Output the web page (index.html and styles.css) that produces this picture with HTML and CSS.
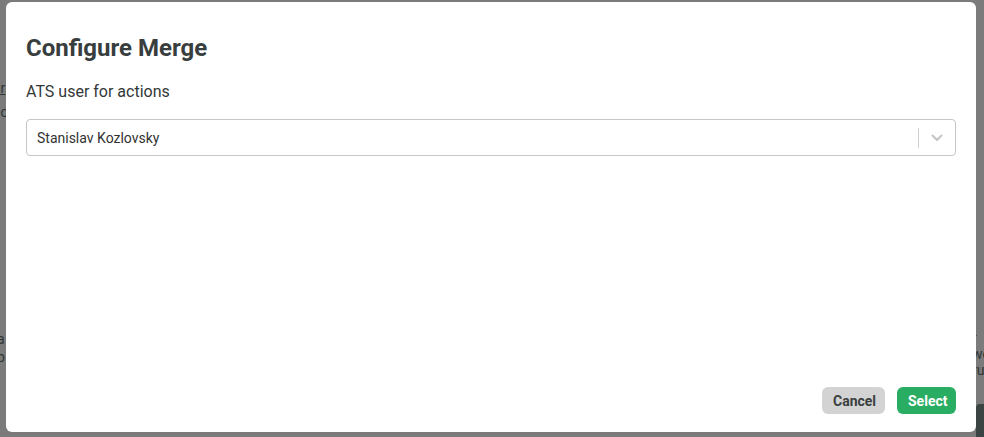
FILE: index.html
```html
<!DOCTYPE html>
<html>
<head>
<meta charset="utf-8">
<link rel="stylesheet" href="styles.css">
</head>
<body>
<div class="backdrop">
  <div class="bg-text left-top"><span class="u">ar</span><br>ec</div>
  <div class="bg-text left-bottom">a<br>b</div>
  <div class="bg-text right-bottom">r<br>wo<br>ru</div>
  <div class="bg-box"></div>
</div>
<div class="modal">
  <h1 class="title">Configure Merge</h1>
  <div class="label">ATS user for actions</div>
  <div class="select">
    <span class="value">Stanislav Kozlovsky</span>
    <span class="sep"></span>
    <span class="chev"><svg width="12" height="8" viewBox="0 0 12 8"><path d="M1.5 1.5 L6 6 L10.5 1.5" fill="none" stroke="#c4c4c4" stroke-width="2" stroke-linecap="round" stroke-linejoin="round"/></svg></span>
  </div>
  <div class="spacer"></div>
  <div class="actions">
    <button class="btn cancel">Cancel</button>
    <button class="btn select-btn">Select</button>
  </div>
</div>
</body>
</html>
```

FILE: styles.css
```css
html, body {
  margin: 0;
  padding: 0;
  width: 984px;
  height: 437px;
  overflow: hidden;
  background: #7b7b7b;
  font-family: Roboto, "Liberation Sans", sans-serif;
}
.backdrop {
  position: absolute;
  inset: 0;
}
.bg-text {
  position: absolute;
  color: #2e3535;
  font-size: 14px;
  line-height: 24px;
}
.bg-text .u { text-decoration: underline; }
.left-top { left: -7px; top: 76px; }
.left-bottom { left: -3px; top: 330px; line-height: 18px; }
.right-bottom { left: 972px; top: 330px; line-height: 16px; }
.bg-box {
  position: absolute;
  left: 976px;
  top: 404px;
  width: 20px;
  height: 40px;
  background: #3c4343;
  border-radius: 4px;
}
.modal {
  position: absolute;
  left: 6px;
  top: 2px;
  width: 970px;
  height: 430px;
  box-sizing: border-box;
  background: #fff;
  border-radius: 6px;
  padding: 32px 20px 18px 20px;
  display: flex;
  flex-direction: column;
}
.title {
  margin: 0;
  font-size: 24px;
  font-weight: 700;
  color: #383e3e;
  line-height: 28px;
}
.label {
  margin-top: 20px;
  font-size: 16px;
  color: #333838;
  line-height: 20px;
}
.select {
  margin-top: 17px;
  height: 37px;
  box-sizing: border-box;
  border: 1px solid #c6c6c6;
  border-radius: 4px;
  display: flex;
  align-items: center;
  padding-left: 10px;
}
.value {
  flex: 1;
  font-size: 14px;
  color: #333;
}
.sep {
  width: 1px;
  height: 20px;
  background: #d0d0d0;
}
.chev {
  width: 36px;
  display: flex;
  justify-content: center;
  align-items: center;
  padding-top: 1px;
}
.spacer { flex: 1; }
.actions {
  display: flex;
  justify-content: flex-end;
  gap: 12px;
}
.btn {
  border: none;
  border-radius: 6px;
  height: 27px;
  font-family: Roboto, "Liberation Sans", sans-serif;
  font-weight: 700;
  font-size: 14px;
  padding: 0 11px;
}
.cancel {
  background: #d3d3d3;
  color: #3a3f3f;
  width: 63px;
}
.select-btn {
  background: #29ad62;
  color: #fff;
  width: 59px;
}
```
